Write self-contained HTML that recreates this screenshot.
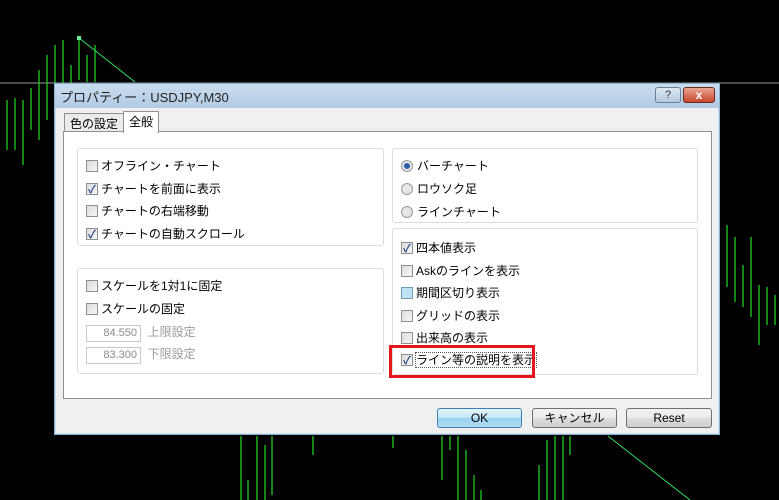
<!DOCTYPE html>
<html><head><meta charset="utf-8"><style>
*{box-sizing:border-box;margin:0;padding:0}
body{width:779px;height:500px;background:#000;position:relative;overflow:hidden;font-family:"Liberation Sans","Noto Sans CJK JP",sans-serif;font-size:12px;color:#000}
.abs{position:absolute}
.dlg{left:54px;top:83px;width:666px;height:352px;background:#f0f0f0;border:1px solid #8fb0cf;box-shadow:inset 0 0 0 1px #cfe0f0}
.title{left:0;top:0;width:664px;height:24px;background:linear-gradient(#c9dcef,#b2cbe4);}
.title span{position:absolute;left:5px;top:3px;font-size:13px;color:#222}
.panel{left:8px;top:47px;width:649px;height:268px;background:#fff;border:1px solid #8e8f8f}
.tab{top:29px;height:20px;border:1px solid #8e8f8f;border-bottom:none;font-size:12px;padding:1px 5px}
.grp{border:1px solid #dcdcdc;border-radius:3px;background:#fff}
.it{position:absolute;height:16px;font-size:12px;white-space:nowrap}
.cb{display:inline-block;width:12px;height:12px;border:1px solid #8f8f8f;background:linear-gradient(135deg,#dcdcdc,#f6f6f6);vertical-align:-2px;margin-right:3px;position:relative}
.cb.on::after{content:"✓";position:absolute;left:1px;top:-3px;font-size:11px;color:#2a4a8a;font-weight:bold}
.rb{display:inline-block;width:12px;height:12px;border:1px solid #9a9a9a;border-radius:50%;background:#e6e6e6;vertical-align:-2px;margin-right:4px;position:relative}
.rb.on::after{content:"";position:absolute;left:2px;top:2px;width:6px;height:6px;border-radius:50%;background:#2a5caa}
.btn{top:324px;height:20px;border:1px solid #707070;border-radius:3px;background:linear-gradient(#f2f2f2,#ebebeb 50%,#dddddd 51%,#cfcfcf);text-align:center;font-size:12px;line-height:18px}
.tb{width:55px;height:17px;border:1px solid #c8c8c8;text-align:right;padding-right:3px;color:#8a8a8a;font-size:11px;line-height:15px}
.gray{color:#9a9a9a}
</style></head><body>
<svg class="abs" style="left:0;top:0" width="779" height="500">
<line x1="0" y1="83" x2="779" y2="83" stroke="#9a9a9a"/>
<g stroke="#22dd22" stroke-width="1.2">
<line x1="7" y1="100" x2="7" y2="150"/><line x1="15" y1="98" x2="15" y2="150"/><line x1="23" y1="100" x2="23" y2="165"/><line x1="31" y1="88" x2="31" y2="130"/><line x1="39" y1="70" x2="39" y2="140"/><line x1="47" y1="55" x2="47" y2="120"/><line x1="55" y1="45" x2="55" y2="95"/><line x1="63" y1="40" x2="63" y2="95"/><line x1="71" y1="65" x2="71" y2="110"/><line x1="79" y1="38" x2="79" y2="80"/><line x1="87" y1="55" x2="87" y2="82"/><line x1="95" y1="45" x2="95" y2="82"/>
<line x1="727" y1="225" x2="727" y2="287"/><line x1="735" y1="237" x2="735" y2="302"/><line x1="743" y1="265" x2="743" y2="307"/><line x1="751" y1="237" x2="751" y2="317"/><line x1="759" y1="285" x2="759" y2="345"/><line x1="767" y1="287" x2="767" y2="325"/><line x1="775" y1="295" x2="775" y2="325"/>
<line x1="241" y1="436" x2="241" y2="500"/><line x1="248" y1="480" x2="248" y2="500"/><line x1="257" y1="436" x2="257" y2="500"/><line x1="265" y1="445" x2="265" y2="500"/><line x1="272" y1="436" x2="272" y2="495"/><line x1="313" y1="436" x2="313" y2="455"/><line x1="393" y1="436" x2="393" y2="448"/><line x1="442" y1="436" x2="442" y2="480"/><line x1="450" y1="436" x2="450" y2="450"/><line x1="458" y1="436" x2="458" y2="500"/><line x1="466" y1="450" x2="466" y2="500"/><line x1="474" y1="475" x2="474" y2="500"/><line x1="481" y1="490" x2="481" y2="500"/><line x1="539" y1="465" x2="539" y2="500"/><line x1="547" y1="440" x2="547" y2="500"/><line x1="555" y1="436" x2="555" y2="500"/><line x1="563" y1="436" x2="563" y2="500"/><line x1="570" y1="436" x2="570" y2="455"/>
</g>
<g stroke="#33dd66" stroke-width="1"><line x1="79" y1="38" x2="135" y2="82"/><line x1="608" y1="436" x2="690" y2="500"/></g>
<rect x="77" y="36" width="4" height="4" fill="#66ee99"/>
</svg>
<div class="abs dlg">
 <div class="abs title"><span>プロパティー：USDJPY,M30</span>
  <div class="abs" style="left:600px;top:3px;width:26px;height:16px;border:1px solid #6a7f96;border-radius:3px;background:linear-gradient(#dde8f3,#b6c9dd);text-align:center;font-size:11px;line-height:14px;color:#333">?</div>
  <div class="abs" style="left:628px;top:3px;width:32px;height:16px;border:1px solid #6d2b20;border-radius:3px;background:linear-gradient(#e9a493,#c9452c);text-align:center;font-size:12px;font-weight:bold;line-height:14px;color:#fff">x</div>
 </div>
 <div class="abs tab" style="left:9px;background:#ececec">色の設定</div>
 <div class="abs tab" style="left:68px;top:27px;height:22px;background:#fff;z-index:2">全般</div>
 <div class="abs panel">
  <div class="abs grp" style="left:13px;top:16px;width:307px;height:98px">
   <div class="it" style="left:8px;top:8px"><span class="cb"></span>オフライン・チャート</div>
   <div class="it" style="left:8px;top:31px"><span class="cb on"></span>チャートを前面に表示</div>
   <div class="it" style="left:8px;top:53px"><span class="cb"></span>チャートの右端移動</div>
   <div class="it" style="left:8px;top:76px"><span class="cb on"></span>チャートの自動スクロール</div>
  </div>
  <div class="abs grp" style="left:13px;top:136px;width:307px;height:106px">
   <div class="it" style="left:8px;top:8px"><span class="cb"></span>スケールを1対1に固定</div>
   <div class="it" style="left:8px;top:31px"><span class="cb"></span>スケールの固定</div>
   <div class="it" style="left:8px;top:54px"><div class="tb" style="display:inline-block">84.550</div> <span class="gray">&nbsp;上限設定</span></div>
   <div class="it" style="left:8px;top:76px"><div class="tb" style="display:inline-block">83.300</div> <span class="gray">&nbsp;下限設定</span></div>
  </div>
  <div class="abs grp" style="left:328px;top:16px;width:306px;height:75px">
   <div class="it" style="left:8px;top:8px"><span class="rb on"></span>バーチャート</div>
   <div class="it" style="left:8px;top:31px"><span class="rb"></span>ロウソク足</div>
   <div class="it" style="left:8px;top:54px"><span class="rb"></span>ラインチャート</div>
  </div>
  <div class="abs grp" style="left:328px;top:96px;width:306px;height:147px">
   <div class="it" style="left:8px;top:10px"><span class="cb on"></span>四本値表示</div>
   <div class="it" style="left:8px;top:33px"><span class="cb"></span>Askのラインを表示</div>
   <div class="it" style="left:8px;top:55px"><span class="cb" style="background:#bfe3f2;border-color:#6f9fb8"></span>期間区切り表示</div>
   <div class="it" style="left:8px;top:78px"><span class="cb"></span>グリッドの表示</div>
   <div class="it" style="left:8px;top:100px"><span class="cb"></span>出来高の表示</div>
   <div class="it" style="left:8px;top:122px"><span class="cb on"></span><span style="outline:1px dotted #555">ライン等の説明を表示</span></div>
  </div>
  <div class="abs" style="left:325px;top:213px;width:146px;height:33px;border:3px solid #e8141c"></div>
 </div>
 <div class="abs btn" style="left:382px;width:85px;border-color:#3c7fb1;background:linear-gradient(#e5f4fc,#c4e5f6 50%,#98d1ef 51%,#b3dcf3)">OK</div>
 <div class="abs btn" style="left:477px;width:85px">キャンセル</div>
 <div class="abs btn" style="left:571px;width:86px">Reset</div>
</div>
</body></html>
